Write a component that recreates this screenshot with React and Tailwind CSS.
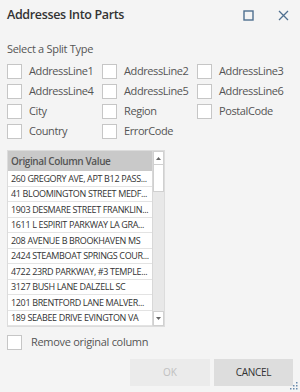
import { useState } from "react";

const splitTypes = [
  "AddressLine1",
  "AddressLine2",
  "AddressLine3",
  "AddressLine4",
  "AddressLine5",
  "AddressLine6",
  "City",
  "Region",
  "PostalCode",
  "Country",
  "ErrorCode",
];

// values are already clipped the way the grid shows them
const rows = [
  "260 GREGORY AVE, APT B12 PASS...",
  "41 BLOOMINGTON STREET MEDF...",
  "1903 DESMARE STREET FRANKLIN...",
  "1611 L ESPIRIT PARKWAY LA GRA...",
  "208 AVENUE B BROOKHAVEN MS",
  "2424 STEAMBOAT SPRINGS COUR...",
  "4722 23RD PARKWAY, #3 TEMPLE...",
  "3127 BUSH LANE DALZELL SC",
  "1201 BRENTFORD LANE MALVER...",
  "189 SEABEE DRIVE EVINGTON VA",
];

function Box({ checked, onClick }) {
  return (
    <button
      onClick={onClick}
      className="w-[15px] h-[15px] shrink-0 bg-white border border-[#c6c6c6] flex items-center justify-center"
    >
      {checked && (
        <svg width="11" height="11" viewBox="0 0 12 12">
          <path d="M2 6.5l2.5 2.5L10 3" fill="none" stroke="#333" strokeWidth="1.5" />
        </svg>
      )}
    </button>
  );
}

export default function App() {
  const [checked, setChecked] = useState({});
  const [removeOriginal, setRemoveOriginal] = useState(false);

  const toggle = (name) => setChecked((prev) => ({ ...prev, [name]: !prev[name] }));

  return (
    <div
      className="w-[300px] h-[392px] bg-[#f4f4f4] text-[#444] flex flex-col relative overflow-hidden"
      style={{ fontFamily: '"Open Sans", "Noto Sans", sans-serif' }}
    >
      <div className="h-[31px] pl-[7px] pr-[11px] flex items-center">
        <h1 className="flex-1 text-[12.5px] font-semibold text-[#333] tracking-[-0.35px]">
          Addresses Into Parts
        </h1>
        <svg width="11" height="11" viewBox="0 0 11 11" className="mr-[24px]">
          <rect x="1" y="1" width="9" height="9" fill="none" stroke="#4f6f8f" strokeWidth="1.4" />
        </svg>
        <svg width="11" height="11" viewBox="0 0 11 11">
          <path d="M1 1L10 10M10 1L1 10" fill="none" stroke="#4f6f8f" strokeWidth="1.3" />
        </svg>
      </div>

      <div className="px-[7px] pt-[11px] text-[11px] text-[#555] leading-[14px] tracking-[-0.3px]">
        Select a Split Type
      </div>

      <div className="grid grid-cols-[95px_95px_1fr] gap-y-[5px] px-[7px] pt-[8px]">
        {splitTypes.map((name) => (
          <div key={name} className="flex items-center gap-[7px] h-[15px]">
            <Box checked={!!checked[name]} onClick={() => toggle(name)} />
            <span className="text-[11px] text-[#555] whitespace-nowrap tracking-[-0.4px]">{name}</span>
          </div>
        ))}
      </div>

      <div className="mx-[7px] mt-[11px] w-[158px] flex border border-[#dcdcdc]">
        <div className="w-[146px] flex flex-col">
          <div className="h-[20px] bg-[#c9c9c9] px-[3px] flex items-center text-[10px] font-semibold text-[#555] tracking-[-0.4px]">
            Original Column Value
          </div>
          {rows.map((row) => (
            <div
              key={row}
              className="h-[15.5px] bg-white border-b border-[#e3e3e3] px-[3px] flex items-center text-[9px] text-[#333] leading-none tracking-[-0.35px] whitespace-nowrap"
            >
              {row}
            </div>
          ))}
        </div>
        <div className="w-[12px] bg-[#e8e8e8] flex flex-col justify-between border-l border-[#d8d8d8]">
          <div>
            <div className="h-[14px] bg-white border border-[#d0d0d0] flex items-center justify-center">
              <svg width="5" height="3" viewBox="0 0 5 3">
                <path d="M0 3L2.5 0L5 3Z" fill="#666" />
              </svg>
            </div>
            <div className="h-[27px] bg-white border border-[#d0d0d0] border-t-0" />
          </div>
          <div className="h-[15px] bg-white border border-[#d0d0d0] flex items-center justify-center">
            <svg width="5" height="3" viewBox="0 0 5 3">
              <path d="M0 0L5 0L2.5 3Z" fill="#666" />
            </svg>
          </div>
        </div>
      </div>

      <div className="px-[7px] pt-[7px] flex items-center gap-[9px]">
        <Box checked={removeOriginal} onClick={() => setRemoveOriginal(!removeOriginal)} />
        <span className="text-[11px] text-[#555] tracking-[-0.3px]">Remove original column</span>
      </div>

      <div className="flex justify-end gap-[4px] pr-[7px] pt-[8px]">
        <button className="w-[80px] h-[27px] bg-[#ebebeb] text-[10px] text-[#c0c0c0]" disabled>
          OK
        </button>
        <button className="w-[79px] h-[27px] bg-[#dddddd] text-[10px] text-[#333] tracking-[-0.3px]">
          CANCEL
        </button>
      </div>

      <svg width="8" height="8" viewBox="0 0 8 8" className="absolute right-[2px] bottom-[2px]">
        <rect x="6" y="0" width="1.5" height="1.5" fill="#6a8bad" />
        <rect x="6" y="3" width="1.5" height="1.5" fill="#6a8bad" />
        <rect x="3" y="3" width="1.5" height="1.5" fill="#6a8bad" />
        <rect x="6" y="6" width="1.5" height="1.5" fill="#6a8bad" />
        <rect x="3" y="6" width="1.5" height="1.5" fill="#6a8bad" />
        <rect x="0" y="6" width="1.5" height="1.5" fill="#6a8bad" />
      </svg>
    </div>
  );
}
